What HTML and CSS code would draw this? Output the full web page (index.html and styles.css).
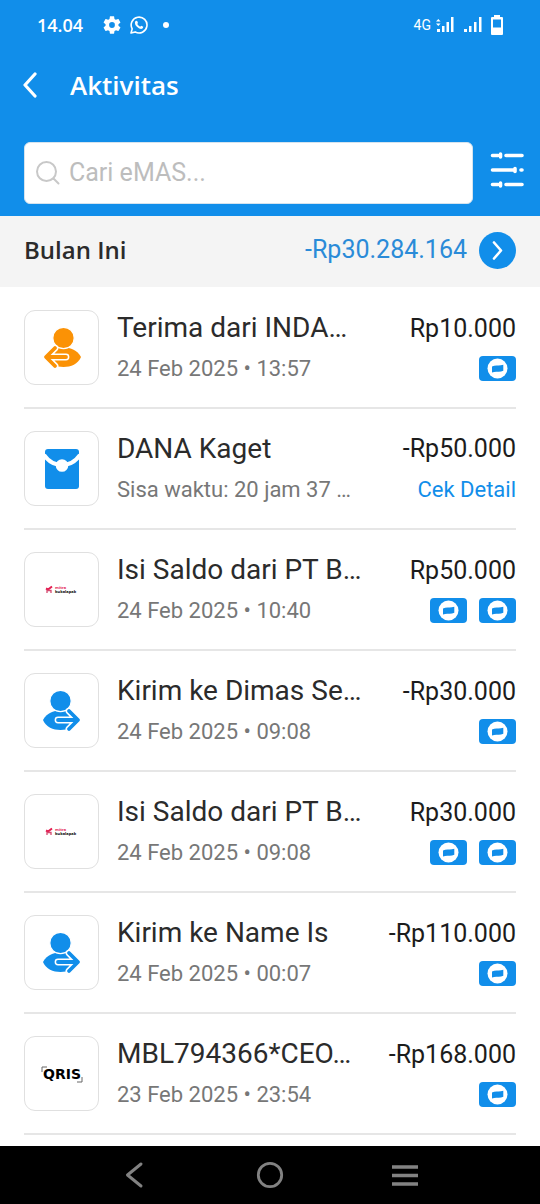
FILE: index.html
```html
<!DOCTYPE html>
<html lang="id">
<head>
<meta charset="utf-8">
<meta name="viewport" content="width=device-width, initial-scale=1">
<title>Aktivitas</title>
<link rel="stylesheet" href="styles.css">
</head>
<body>
<svg class="defs" aria-hidden="true">
  <symbol id="send" viewBox="0 0 38 42">
    <path d="M0 30C4 23 10 20.500 17.500 20.500S32 23 36 30C32 37 25 40 17.500 40S3 37 0 30Z" fill="currentColor"/>
    <circle cx="17.500" cy="11" r="10.700" fill="currentColor" stroke="#fff" stroke-width="1.200"/>
    <path d="M15 30H34M26 21L35 30L26 39" fill="none" stroke="#fff" stroke-width="6.800" stroke-linecap="round" stroke-linejoin="round"/>
    <path d="M15 30H34M26 21L35 30L26 39" fill="none" stroke="currentColor" stroke-width="3.800" stroke-linecap="round" stroke-linejoin="round"/>
  </symbol>
  <symbol id="receive" viewBox="0 0 38 42">
    <path d="M38 30C34 23 28 20.500 20.500 20.500S6 23 2 30C6 37 13 40 20.500 40S35 37 38 30Z" fill="currentColor"/>
    <circle cx="20.500" cy="11" r="10.700" fill="currentColor" stroke="#fff" stroke-width="1.200"/>
    <path d="M23 30H4M12 21L3 30L12 39" fill="none" stroke="#fff" stroke-width="6.800" stroke-linecap="round" stroke-linejoin="round"/>
    <path d="M23 30H4M12 21L3 30L12 39" fill="none" stroke="currentColor" stroke-width="3.800" stroke-linecap="round" stroke-linejoin="round"/>
  </symbol>
  <symbol id="wallet" viewBox="0 0 37 25">
    <rect width="37" height="25" rx="4" fill="#118eea"/>
    <circle cx="18.500" cy="12.500" r="10" fill="#fff"/>
    <path d="M13 10.500Q15.500 9.300 18.500 9.500T24.300 8.700V14.800Q21.500 16 18.500 15.700T13 16.500Z" fill="#118eea"/>
  </symbol>
</svg>

<header class="top">
  <div class="status">
    <div class="status-group">
      <span class="clock">14.04</span>
      <svg width="18" height="18" viewBox="2 2 20 20" fill="#fff"><path d="M19.140 12.940c.04-.3.060-.61.060-.94s-.02-.64-.07-.94l2.030-1.580c.18-.14.230-.41.120-.61l-1.920-3.320c-.12-.22-.37-.29-.59-.22l-2.390.96c-.5-.38-1.030-.7-1.620-.94l-.36-2.540c-.04-.24-.24-.41-.48-.41h-3.840c-.24 0-.43.17-.47.41l-.36 2.540c-.59.240-1.130.570-1.620.940l-2.390-.96c-.22-.08-.47 0-.59.220L2.740 8.870c-.12.210-.08.470.120.610l2.030 1.580c-.05.300-.09.630-.09.940s.02.640.070.940l-2.030 1.580c-.18.140-.23.410-.12.610l1.920 3.320c.12.220.37.290.590.220l2.390-.96c.5.380 1.030.700 1.620.940l.36 2.540c.05.240.240.410.480.410h3.840c.24 0 .44-.17.470-.41l.36-2.540c.59-.24 1.130-.56 1.620-.94l2.390.96c.22.080.470 0 .59-.22l1.920-3.320c.12-.22.070-.47-.12-.61zM12 15.200A3.200 3.200 0 1 1 12 8.800a3.200 3.200 0 0 1 0 6.400z"/></svg>
      <svg width="18" height="18" viewBox="0 0 18 18"><path d="M1 17L2.200 12.900A7.900 7.900 0 1 1 5.200 15.900Z" fill="none" stroke="#fff" stroke-width="1.600" stroke-linejoin="round"/><path d="M6 4.700L7.200 4.900L8 7L7.200 8.100Q8.200 9.900 10.100 10.700L11.200 9.700L13.300 10.700Q13.400 12.600 11.200 13Q9.300 13 6.900 10.800Q4.800 8.700 4.900 6.700Q5 5.300 6 4.700Z" fill="#fff"/></svg>
      <span class="dot"></span>
    </div>
    <div class="status-group status-right">
      <span class="network">4G</span>
      <svg width="19" height="18" viewBox="0 0 19 18" fill="#fff"><path d="M0 5.500L2.300 3L4.600 5.500ZM0 7.500H4.600L2.300 10Z"/><path d="M1 13h3v3H1zM6 10h2.500v6H6zM10.500 6H13v10h-2.500zM15 1h2.500v15H15z"/></svg>
      <svg width="18" height="18" viewBox="0 0 18 18" fill="#fff"><path d="M0 13h3v3H0zM5 10h2.500v6H5zM10 6h2.500v10H10zM15 1h2.500v15H15z"/></svg>
      <svg width="12" height="20" viewBox="0 0 12 20"><path fill="#fff" fill-rule="evenodd" d="M3 0H9V2H11Q12 2 12 3V19Q12 20 11 20H1Q0 20 0 19V3Q0 2 1 2H3ZM2 4.500V12.500H10V4.500Z"/></svg>
    </div>
  </div>
  <div class="title-bar">
    <button class="icon-button" aria-label="Kembali"><svg width="16" height="26" viewBox="0 0 16 26"><path d="M13 2L3 13L13 24" fill="none" stroke="#fff" stroke-width="3.200" stroke-linecap="round" stroke-linejoin="round"/></svg></button>
    <h1>Aktivitas</h1>
  </div>
  <div class="search-row">
    <label class="search">
      <svg width="24" height="24" viewBox="0 0 24 24" fill="none" stroke="#c8c8c8" stroke-width="2" stroke-linecap="round"><circle cx="10.500" cy="10.500" r="9.500"/><path d="M17.500 17.500L22.500 22.500"/></svg>
      <input type="search" placeholder="Cari eMAS..." aria-label="Cari">
    </label>
    <button class="icon-button" aria-label="Filter"><svg width="34" height="44" viewBox="0 0 34 44" fill="none" stroke="#fff" stroke-width="3.600" stroke-linecap="round"><path d="M2.500 4.500H8M16 4.500H32M2.500 19H24M31 19H32M2.500 33.500H8M16 33.500H32"/><path d="M10.500 3V6M25 17.500V20.500M10.500 32V35"/></svg></button>
  </div>
</header>

<main>
  <section class="month">
    <h2>Bulan Ini</h2>
    <span class="total">-Rp30.284.164</span>
    <button class="icon-button" aria-label="Lihat ringkasan"><svg width="37" height="37" viewBox="0 0 37 37"><circle cx="18.500" cy="18.500" r="18.500" fill="#118eea"/><path d="M15 10.500L22 18.500L15 26.500" fill="none" stroke="#fff" stroke-width="2.600" stroke-linecap="round" stroke-linejoin="round"/></svg></button>
  </section>

  <ul class="list">
    <li class="item">
      <span class="tile receive"><svg width="38" height="42"><use href="#receive"/></svg></span>
      <div class="info"><h3>Terima dari INDA…</h3><p>24 Feb 2025 • 13:57</p></div>
      <div class="side"><span class="amount">Rp10.000</span><span class="badges"><svg width="37" height="25"><use href="#wallet"/></svg></span></div>
    </li>
    <li class="item">
      <span class="tile"><svg width="34" height="42" viewBox="0 0 34 42"><rect y="1" width="34" height="40" rx="3" fill="#118eea"/><path d="M-1 7Q6 17 17 17T35 7" fill="none" stroke="#fff" stroke-width="4"/><circle cx="17" cy="17.500" r="6.300" fill="#fff"/></svg></span>
      <div class="info"><h3>DANA Kaget</h3><p>Sisa waktu: 20 jam 37 …</p></div>
      <div class="side"><span class="amount">-Rp50.000</span><a href="#detail">Cek Detail</a></div>
    </li>
    <li class="item">
      <span class="tile"><svg width="36" height="12" viewBox="0 0 36 12"><path d="M2 4.500L4 5.500L8 2.500" fill="none" stroke="#e31e52" stroke-width="2"/><path d="M3 9V6.500H7V9" fill="none" stroke="#d64a70" stroke-width="1.300"/><text x="11" y="5" class="mitra-top">mitra</text><text x="11" y="9" class="mitra-name">bukalapak</text></svg></span>
      <div class="info"><h3>Isi Saldo dari PT B…</h3><p>24 Feb 2025 • 10:40</p></div>
      <div class="side"><span class="amount">Rp50.000</span><span class="badges"><svg width="37" height="25"><use href="#wallet"/></svg><svg width="37" height="25"><use href="#wallet"/></svg></span></div>
    </li>
    <li class="item">
      <span class="tile"><svg width="38" height="42"><use href="#send"/></svg></span>
      <div class="info"><h3>Kirim ke Dimas Se…</h3><p>24 Feb 2025 • 09:08</p></div>
      <div class="side"><span class="amount">-Rp30.000</span><span class="badges"><svg width="37" height="25"><use href="#wallet"/></svg></span></div>
    </li>
    <li class="item">
      <span class="tile"><svg width="36" height="12" viewBox="0 0 36 12"><path d="M2 4.500L4 5.500L8 2.500" fill="none" stroke="#e31e52" stroke-width="2"/><path d="M3 9V6.500H7V9" fill="none" stroke="#d64a70" stroke-width="1.300"/><text x="11" y="5" class="mitra-top">mitra</text><text x="11" y="9" class="mitra-name">bukalapak</text></svg></span>
      <div class="info"><h3>Isi Saldo dari PT B…</h3><p>24 Feb 2025 • 09:08</p></div>
      <div class="side"><span class="amount">Rp30.000</span><span class="badges"><svg width="37" height="25"><use href="#wallet"/></svg><svg width="37" height="25"><use href="#wallet"/></svg></span></div>
    </li>
    <li class="item">
      <span class="tile"><svg width="38" height="42"><use href="#send"/></svg></span>
      <div class="info"><h3>Kirim ke Name Is</h3><p>24 Feb 2025 • 00:07</p></div>
      <div class="side"><span class="amount">-Rp110.000</span><span class="badges"><svg width="37" height="25"><use href="#wallet"/></svg></span></div>
    </li>
    <li class="item">
      <span class="tile"><svg width="42" height="18" viewBox="0 0 42 18"><text x="21" y="14" text-anchor="middle" class="qris">QRIS</text><path d="M1 7V2H6M41 12V17H36" fill="none" stroke="#666"/></svg></span>
      <div class="info"><h3>MBL794366*CEO…</h3><p>23 Feb 2025 • 23:54</p></div>
      <div class="side"><span class="amount">-Rp168.000</span><span class="badges"><svg width="37" height="25"><use href="#wallet"/></svg></span></div>
    </li>
  </ul>
</main>

<nav class="system-nav" aria-label="Navigasi sistem">
  <button class="icon-button" aria-label="Kembali"><svg width="28" height="28" viewBox="0 0 28 28"><path d="M20 3L6.500 14L20 25" fill="none" stroke="#828282" stroke-width="3" stroke-linecap="round" stroke-linejoin="round"/></svg></button>
  <button class="icon-button" aria-label="Beranda"><svg width="28" height="28" viewBox="0 0 28 28"><circle cx="14" cy="14" r="11.700" fill="none" stroke="#828282" stroke-width="2.800"/></svg></button>
  <button class="icon-button" aria-label="Aplikasi terbaru"><svg width="28" height="28" viewBox="0 0 28 28"><path d="M1 6H27M1 14.500H27M1 23H27" stroke="#828282" stroke-width="3.400"/></svg></button>
</nav>
</body>
</html>
```
FILE: styles.css
```css
* {
  box-sizing: border-box;
}

body {
  margin: 0;
  min-height: 100vh;
  display: flex;
  flex-direction: column;
  background: #fff;
  color: #2b2b2b;
  font-family: Roboto, "Noto Sans", sans-serif;
}

h1, h2, h3, p, ul {
  margin: 0;
  padding: 0;
}

svg {
  display: block;
  flex: none;
}

.defs {
  position: absolute;
  width: 0;
  height: 0;
}

.icon-button {
  display: block;
  flex: none;
  padding: 0;
  border: 0;
  background: none;
  cursor: pointer;
}

.top {
  background: #118eea;
  color: #fff;
}

.status {
  display: flex;
  justify-content: space-between;
  height: 50px;
  padding: 0 37px;
}

.status-group {
  display: flex;
  align-items: center;
  gap: 9px;
}

.clock {
  margin-right: 11px;
  font: 600 18px/24px "Open Sans", sans-serif;
}

.dot {
  width: 6px;
  height: 6px;
  margin-left: 6px;
  border-radius: 50%;
  background: #fff;
}

.network {
  margin-right: -4px;
  font-size: 14px;
}

.title-bar {
  display: flex;
  align-items: center;
  gap: 32px;
  height: 70px;
  padding: 0 22px;
}

h1 {
  font: 600 26px/36px "Open Sans", sans-serif;
}

.search-row {
  display: flex;
  align-items: center;
  gap: 17px;
  padding: 22px 16px 12px 24px;
}

.search {
  flex: 1;
  min-width: 0;
  display: flex;
  align-items: center;
  gap: 9px;
  height: 62px;
  padding: 0 11px;
  border: 1px solid #d5e3ee;
  border-radius: 6px;
  background: #fff;
}

.search input {
  flex: 1;
  min-width: 0;
  padding: 0;
  border: 0;
  outline: 0;
  background: none;
  color: #2b2b2b;
  font: 25px/32px Roboto, sans-serif;
}

.search input::placeholder {
  color: #bdbdbd;
}

.month {
  display: flex;
  align-items: center;
  gap: 12px;
  height: 71px;
  padding: 0 24px 3px;
  background: #f4f4f4;
}

h2 {
  flex: 1;
  font: 600 24px/32px "Open Sans", sans-serif;
}

.total {
  color: #2a8bd8;
  font-size: 25px;
  line-height: 32px;
}

.list {
  padding: 1px 24px 0;
  list-style: none;
}

.item {
  display: flex;
  align-items: center;
  height: 121px;
  border-bottom: 2px solid #e6e6e6;
}

.tile {
  display: flex;
  flex: none;
  align-items: center;
  justify-content: center;
  width: 75px;
  height: 75px;
  margin-right: 18px;
  border: 1px solid #e0e0e0;
  border-radius: 11px;
  color: #118eea;
}

.receive {
  color: #fb9205;
}

.info {
  flex: 1;
  min-width: 0;
  padding-bottom: 3px;
}

h3 {
  overflow: hidden;
  font-size: 28px;
  font-weight: 400;
  line-height: 36px;
  white-space: nowrap;
}

.info p {
  margin-top: 9px;
  color: #777;
  font-size: 22px;
  line-height: 28px;
  white-space: nowrap;
}

.side {
  display: flex;
  flex-direction: column;
  align-items: flex-end;
  gap: 10px;
  padding-bottom: 2px;
}

.amount {
  color: #1c1c1c;
  font-size: 25px;
  line-height: 34px;
}

.side a {
  color: #118eea;
  font-size: 22px;
  line-height: 28px;
  text-decoration: none;
}

.badges {
  display: flex;
  gap: 12px;
}

.mitra-top {
  fill: #e31e52;
  font: bold 4px "Open Sans", sans-serif;
}

.mitra-name {
  fill: #000;
  font: bold 4px "Open Sans", sans-serif;
}

.qris {
  fill: #000;
  font: bold 14px "DejaVu Sans", sans-serif;
}

.system-nav {
  display: flex;
  flex: 1;
  align-items: center;
  justify-content: space-evenly;
  min-height: 58px;
  margin-top: 11px;
  padding: 0 14px;
  background: #000;
}
```
